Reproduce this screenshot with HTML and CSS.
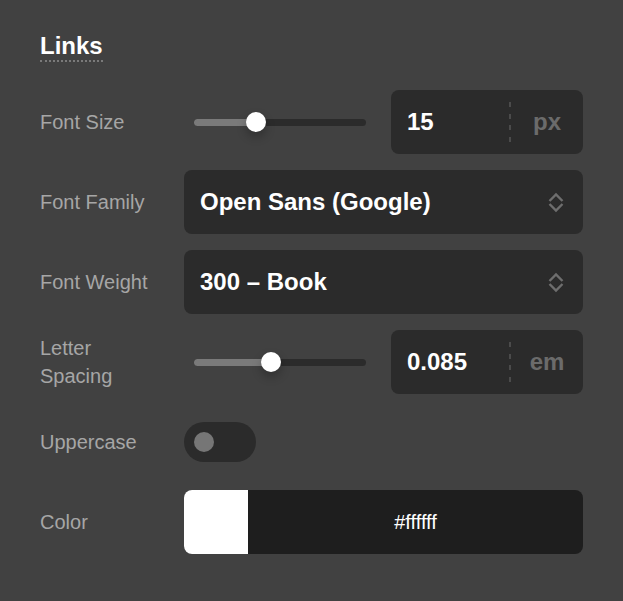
FILE: index.html
```html
<!DOCTYPE html>
<html>

<head>
    <link rel="stylesheet" href="styles.css">
</head>

<body>
    <div class="panel">
        <h3 class="panelTitle">Links</h3>

        <div class="settings">
            <div class="row">
                <label class="rowLabel">Font Size</label>
                <div class="rowControl">
                    <div class="slider">
                        <div class="track">
                            <div class="fill" style="width: 36%"></div>
                            <div class="thumb" style="left: 36%"></div>
                        </div>
                    </div>
                    <div class="numberBox">
                        <span class="numberValue">15</span>
                        <span class="divider"></span>
                        <span class="numberUnit">px</span>
                    </div>
                </div>
            </div>

            <div class="row">
                <label class="rowLabel">Font Family</label>
                <div class="select">
                    <span>Open Sans (Google)</span>
                    <svg class="chevrons" width="16" height="21" viewBox="0 0 16 21">
                        <polyline points="1.5,9 8,2.5 14.5,9" />
                        <polyline points="1.5,12 8,18.5 14.5,12" />
                    </svg>
                </div>
            </div>

            <div class="row">
                <label class="rowLabel">Font Weight</label>
                <div class="select">
                    <span>300 &ndash; Book</span>
                    <svg class="chevrons" width="16" height="21" viewBox="0 0 16 21">
                        <polyline points="1.5,9 8,2.5 14.5,9" />
                        <polyline points="1.5,12 8,18.5 14.5,12" />
                    </svg>
                </div>
            </div>

            <div class="row">
                <label class="rowLabel">Letter Spacing</label>
                <div class="rowControl">
                    <div class="slider">
                        <div class="track">
                            <div class="fill" style="width: 45%"></div>
                            <div class="thumb" style="left: 45%"></div>
                        </div>
                    </div>
                    <div class="numberBox">
                        <span class="numberValue">0.085</span>
                        <span class="divider"></span>
                        <span class="numberUnit">em</span>
                    </div>
                </div>
            </div>

            <div class="row">
                <label class="rowLabel">Uppercase</label>
                <div class="toggle">
                    <span class="knob"></span>
                </div>
            </div>

            <div class="row">
                <label class="rowLabel">Color</label>
                <div class="colorPicker">
                    <span class="swatch"></span>
                    <span class="hex">#ffffff</span>
                </div>
            </div>
        </div>
    </div>
</body>

</html>
```

FILE: styles.css
```css
body {
    margin: 0;
    background-color: #414141;
    font-family: "Liberation Sans", Arial, sans-serif;
}

.panel {
    padding: 32px 40px 40px 40px;
}

.panelTitle {
    display: inline-block;
    margin: 0 0 28px 0;
    font-size: 24px;
    line-height: 28px;
    font-weight: bold;
    color: #ffffff;
    border-bottom: 2px dotted #7a7a7a;
}

.settings {
    display: flex;
    flex-direction: column;
    gap: 16px;
}

.row {
    display: grid;
    grid-template-columns: 144px 1fr;
    align-items: center;
    height: 64px;
}

.rowLabel {
    padding-right: 24px;
    font-size: 20px;
    line-height: 28px;
    color: #a6a6a6;
}

.rowControl {
    display: flex;
    align-items: center;
    gap: 10px;
    height: 64px;
}

.slider {
    flex: 1;
    padding: 0 15px 0 10px;
}

.track {
    position: relative;
    height: 7px;
    border-radius: 4px;
    background-color: #2b2b2b;
}

.fill {
    height: 100%;
    border-radius: 4px 0 0 4px;
    background-color: #7a7a7a;
}

.thumb {
    position: absolute;
    top: 50%;
    width: 20px;
    height: 20px;
    margin: -10px 0 0 -10px;
    border-radius: 50%;
    background-color: #ffffff;
    box-shadow: 0 5px 10px rgba(0, 0, 0, 0.25);
}

.numberBox {
    display: flex;
    align-items: center;
    width: 192px;
    height: 64px;
    border-radius: 8px;
    background-color: #2b2b2b;
    font-size: 24px;
    font-weight: bold;
}

.numberValue {
    flex: 1;
    padding-left: 16px;
    color: #ffffff;
}

.divider {
    width: 2px;
    height: 40px;
    background: repeating-linear-gradient(to bottom, #4b4b4b 0 5px, transparent 5px 11.6px);
}

.numberUnit {
    width: 72px;
    text-align: center;
    color: #6b6b6b;
}

.select {
    display: flex;
    align-items: center;
    justify-content: space-between;
    height: 64px;
    padding: 0 19px 0 16px;
    border-radius: 8px;
    background-color: #2b2b2b;
    font-size: 24px;
    font-weight: bold;
    color: #ffffff;
}

.chevrons polyline {
    fill: none;
    stroke: #6e6e6e;
    stroke-width: 2.4;
}

.toggle {
    display: flex;
    align-items: center;
    width: 72px;
    height: 40px;
    padding-left: 10px;
    box-sizing: border-box;
    border-radius: 20px;
    background-color: #2b2b2b;
}

.knob {
    width: 20px;
    height: 20px;
    border-radius: 50%;
    background-color: #767676;
}

.colorPicker {
    display: flex;
    height: 64px;
    border-radius: 8px;
    overflow: hidden;
    background-color: #1e1e1e;
}

.swatch {
    width: 64px;
    background-color: #ffffff;
}

.hex {
    flex: 1;
    align-self: center;
    text-align: center;
    font-size: 20px;
    color: #ffffff;
}
```
